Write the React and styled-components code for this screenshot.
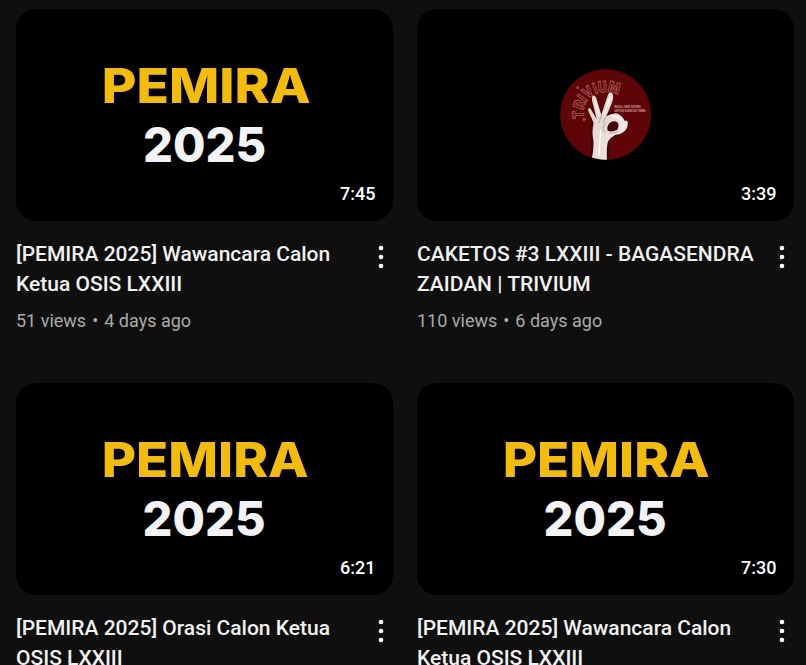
import React from "react";
import styled, { createGlobalStyle } from "styled-components";

const GlobalStyle = createGlobalStyle`
  * { box-sizing: border-box; }
  html, body { margin: 0; background: #0f0f0f; }
  body { font-family: Roboto, Arial, sans-serif; overflow: hidden; }
`;

const Page = styled.main`
  height: 665px;
  overflow: hidden;
  padding: 9px 0 0 16px;
  background: #0f0f0f;
`;

const VideoGrid = styled.div`
  display: grid;
  grid-template-columns: 377px 377px;
  column-gap: 24px;
  grid-auto-rows: 374px;
`;

const Card = styled.article`
  display: flex;
  flex-direction: column;
`;

const Thumbnail = styled.div`
  position: relative;
  height: 212px;
  border-radius: 20px;
  overflow: hidden;
  background: #000;
`;

const Artwork = styled.svg`
  display: block;
  width: 377px;
  height: 212px;
`;

const Duration = styled.span`
  position: absolute;
  right: 17.5px;
  bottom: 16px;
  font-size: 18px;
  line-height: 22px;
  font-weight: 500;
  color: #fff;
`;

const Details = styled.div`
  display: flex;
  justify-content: space-between;
  padding-top: 18px;
`;

const Copy = styled.div`
  width: 345px;
`;

const Title = styled.h3`
  margin: 0;
  font-size: 21px;
  line-height: 30px;
  font-weight: 500;
  color: #f1f1f1;
  white-space: pre-line;
`;

const Meta = styled.div`
  display: flex;
  margin-top: 9px;
  font-size: 18px;
  line-height: 26px;
  color: #aaa;
`;

const Dot = styled.span`
  margin: 0 6px;
`;

const MenuButton = styled.button`
  display: flex;
  width: 24px;
  height: 36px;
  padding: 0;
  border: 0;
  background: none;
`;

const MenuIcon = styled.svg`
  width: 24px;
  height: 36px;
  fill: #fff;
`;

function PemiraArt({ width = 207, numberLeft = 126.5 }) {
  return (
    <Artwork viewBox="0 0 377 212">
      <g fontFamily="Inter, sans-serif" fontWeight="850" fontSize="48">
        <text x="85.7" y="94" textLength={width} lengthAdjust="spacingAndGlyphs" fill="#f3bc08">PEMIRA</text>
        <text x={numberLeft} y="153" textLength="123" lengthAdjust="spacingAndGlyphs" fill="#f3f3f5">2025</text>
      </g>
    </Artwork>
  );
}

function TriviumArt() {
  return (
    <Artwork viewBox="0 0 377 212">
      <defs>
        <clipPath id="badge"><circle cx="166" cy="163" r="135" /></clipPath>
        <linearGradient id="skin" x1="0" y1="0" x2="1" y2="1">
          <stop offset="0" stopColor="#e9cfc0" />
          <stop offset=".45" stopColor="#e6dcd8" />
          <stop offset="1" stopColor="#f3efee" />
        </linearGradient>
        <path id="wordArc" d="M102 174 C88 124 136 74 205 104" />
      </defs>
      <g transform="translate(133.3 51.3) scale(.33333)">
        <circle cx="166" cy="163" r="136" fill="#5e0508" />
        <text fontFamily="Inter, sans-serif" fontWeight="800" fontSize="45" fill="#540508" stroke="#ad5a54" strokeWidth="3">
          <textPath href="#wordArc" textLength="158" lengthAdjust="spacingAndGlyphs">TRIVIUM</textPath>
        </text>
        <g fill="#8f3030" stroke="#b8746a" strokeWidth="2">
          <circle cx="82" cy="82" r="3" />
          <circle cx="101" cy="177" r="3.5" />
        </g>
        <g clipPath="url(#badge)">
          <path
            fill="#350305"
            opacity=".65"
            d="M124 101 L147 174 L171 97 L185 92 L190 111 L170 160 L196 153 L221 179 L235 182 L231 207 L205 226 L176 234 L174 300 L122 300Z"
          />
          <path
            fill="url(#skin)"
            fillRule="evenodd"
            d="M125 110 Q131 101 137 111 L153 163 L173 103 Q180 90 187 101 Q191 111 185 127 L168 168
            Q180 160 197 159 Q215 163 224 183 Q229 178 232 185 Q234 197 227 208 Q213 223 196 223
            Q182 230 174 242 Q168 254 170 304 L122 306 Q132 265 129 239 Q124 215 130 187
            L113 150 Q114 140 121 145 L139 176 L125 120Z
            M182 185 Q168 195 172 211 Q185 217 201 208 Q207 197 203 187 Q193 180 182 185Z"
          />
          <g fill="none" stroke="#9b7c73" strokeWidth="2.5" strokeLinecap="round" opacity=".65">
            <path d="M153 165 L147 187 M167 170 L157 187" />
            <path d="M165 187 Q152 206 165 218 M178 219 Q193 221 204 212" />
          </g>
          <g fill="none" stroke="#fffaf7" strokeWidth="4" strokeLinecap="round">
            <path d="M133 118 L146 165 M180 110 L163 158 M151 211 L146 286 M185 168 Q202 166 212 179" />
          </g>
        </g>
        <g fontFamily="Inter, sans-serif" fontWeight="700" fontSize="9" fill="#d09c94">
          <text x="192" y="142" textLength="80" lengthAdjust="spacingAndGlyphs">RAGA JIWA SATRIA</text>
          <text x="192" y="155" textLength="94" lengthAdjust="spacingAndGlyphs">UNTUK BANGSA TAMA</text>
        </g>
      </g>
    </Artwork>
  );
}

const videos = [
  { title: "[PEMIRA 2025] Wawancara Calon\nKetua OSIS LXXIII", views: "51 views", age: "4 days ago", time: "7:45", art: <PemiraArt width={209} numberLeft={127} /> },
  { title: "CAKETOS #3 LXXIII - BAGASENDRA\nZAIDAN | TRIVIUM", views: "110 views", age: "6 days ago", time: "3:39", art: <TriviumArt /> },
  { title: "[PEMIRA 2025] Orasi Calon Ketua\nOSIS LXXIII", time: "6:21", art: <PemiraArt /> },
  { title: "[PEMIRA 2025] Wawancara Calon\nKetua OSIS LXXIII", time: "7:30", art: <PemiraArt /> },
];

export default function App() {
  return (
    <Page>
      <GlobalStyle />
      <VideoGrid>
        {videos.map((v) => (
          <Card key={v.time}>
            <Thumbnail>{v.art}<Duration>{v.time}</Duration></Thumbnail>
            <Details>
              <Copy>
                <Title>{v.title}</Title>
                {v.views && <Meta>{v.views}<Dot>•</Dot>{v.age}</Meta>}
              </Copy>
              <MenuButton aria-label="More actions">
                <MenuIcon viewBox="0 0 24 36">
                  <circle cx="12" cy="9" r="2.3" /><circle cx="12" cy="18" r="2.3" /><circle cx="12" cy="27" r="2.3" />
                </MenuIcon>
              </MenuButton>
            </Details>
          </Card>
        ))}
      </VideoGrid>
    </Page>
  );
}
